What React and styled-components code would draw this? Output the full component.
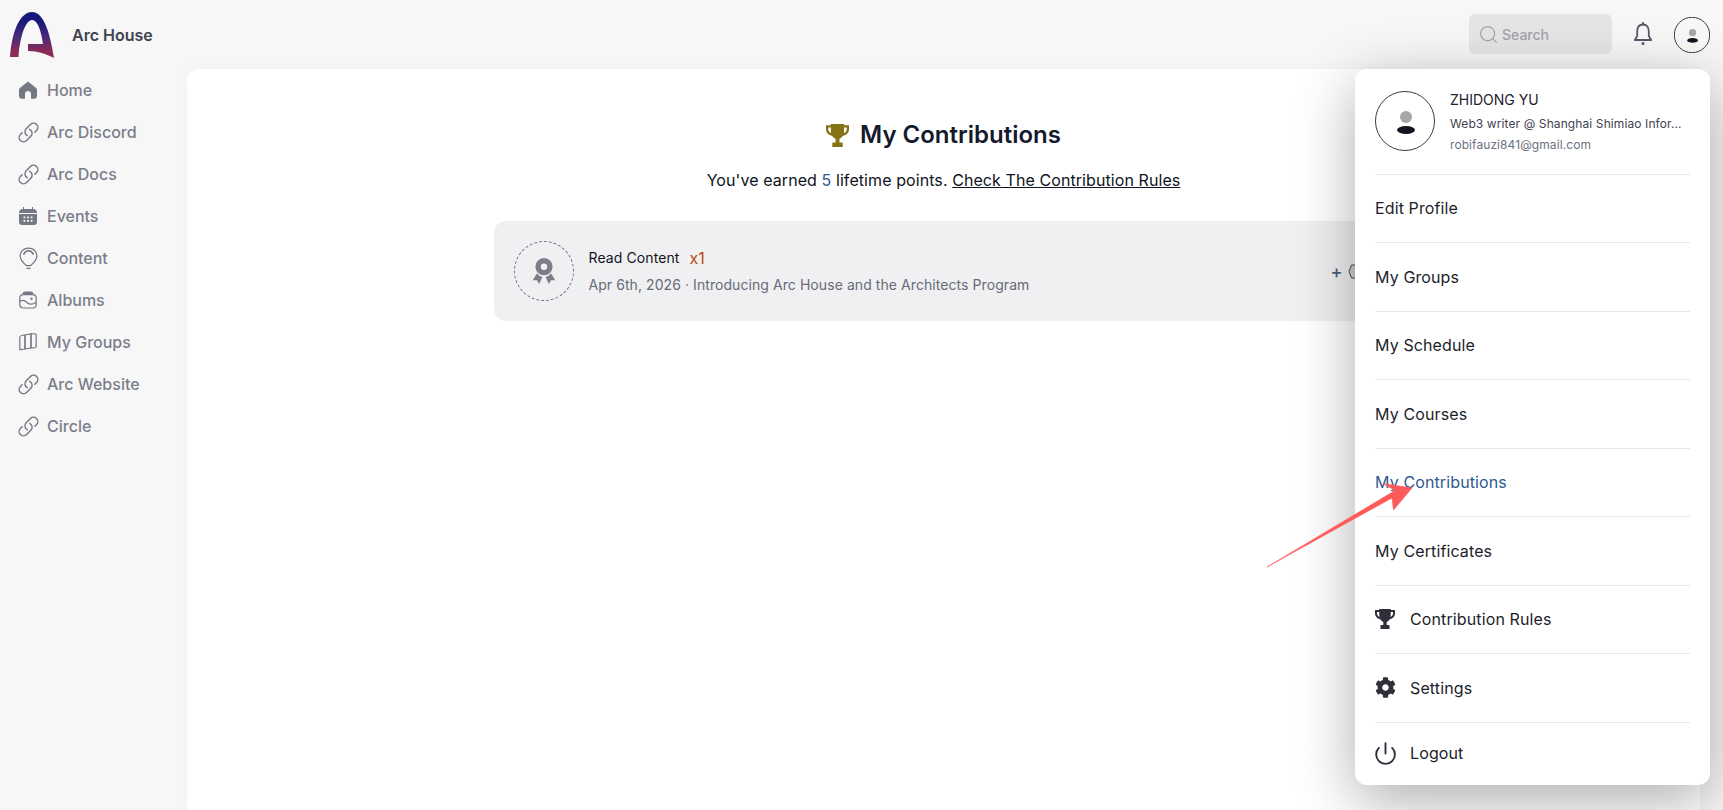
import React from "react"
import styled, { createGlobalStyle } from "styled-components"
import { FaCog } from "react-icons/fa"
import { HiOutlineLink } from "react-icons/hi2"
import { LuPower, LuSearch } from "react-icons/lu"

const GlobalStyle = createGlobalStyle`
  html, body {
    margin: 0;
    height: 100%;
    overflow: hidden;
    background: #f7f7f7;
    font-family: Inter, "Noto Sans", sans-serif;
  }
  * { box-sizing: border-box; }
`

const Page = styled.div`
  position: relative;
  width: 1723px;
  height: 810px;
  overflow: hidden;
  display: flex;
  flex-direction: column;
`

const TopBar = styled.header`
  height: 69px;
  flex: none;
  display: flex;
  align-items: center;
  padding: 0 13px 0 10px;
`

const Brand = styled.div`
  display: flex;
  align-items: center;
  gap: 18px;
  font-size: 16px;
  font-weight: 600;
  color: #3f4350;
`

const TopActions = styled.div`
  margin-left: auto;
  display: flex;
  align-items: center;
`

const SearchBox = styled.div`
  width: 143px;
  height: 40px;
  margin-top: -1px;
  border-radius: 6px;
  background: #e5e5e5;
  display: flex;
  align-items: center;
  gap: 3px;
  padding: 0 9px;
  font-size: 14px;
  font-weight: 500;
  color: #a3a3ab;
`

const BellButton = styled.div`
  display: flex;
  margin: -2px 21px 0 21px;
  color: #565a66;
`

const Body = styled.div`
  flex: 1;
  display: flex;
  min-height: 0;
`

const Sidebar = styled.nav`
  width: 187px;
  flex: none;
  padding-left: 19px;
`

const NavRow = styled.div`
  height: 42px;
  display: flex;
  align-items: center;
  gap: 10px;
  font-size: 16px;
  font-weight: 500;
  color: #7a7e8a;
`

const IconSlot = styled.span`
  width: 18px;
  height: 22px;
  flex: none;
  display: flex;
  align-items: center;
  justify-content: center;
  color: #747884;

  svg {
    flex: none;
    width: ${(p) => (p.$large ? "23px" : "18px")};
    height: ${(p) => (p.$large ? "23px" : "18px")};
  }
`

const Main = styled.main`
  flex: 1;
  margin-right: 23px;
  background: #fff;
  border-radius: 12px 12px 0 0;
  box-shadow: 0 0 16px rgba(0, 0, 0, 0.03);
  display: flex;
  flex-direction: column;
  align-items: center;
`

const Title = styled.h1`
  margin: 51px 0 0;
  display: flex;
  align-items: center;
  gap: 11px;
  font-size: 24px;
  line-height: 30px;
  font-weight: 600;
  color: #151a2d;

  svg {
    color: #857415;
  }
`

const Summary = styled.p`
  margin: 18px 0 0;
  font-size: 16px;
  line-height: 24px;
  font-weight: 400;
  letter-spacing: 0.08px;
  color: #0f1322;
`

const Points = styled.span`
  color: #2f5a92;
`

const RulesLink = styled.a`
  color: #0f1322;
  text-decoration: underline;
`

const Card = styled.section`
  width: 900px;
  height: 100px;
  margin-top: 29px;
  padding: 0 20px;
  border-radius: 12px;
  background: #f0f0f2;
  display: flex;
  align-items: center;
  gap: 15px;
`

const Badge = styled.div`
  width: 60px;
  height: 60px;
  flex: none;
  border: 1px dashed #6b6f78;
  border-radius: 50%;
  display: flex;
  align-items: center;
  justify-content: center;
`

const CardText = styled.div`
  display: flex;
  flex-direction: column;
  gap: 7px;
  margin-top: 1px;
`

const CardTitle = styled.div`
  display: flex;
  align-items: center;
  gap: 10px;
  font-size: 14px;
  line-height: 20px;
  font-weight: 400;
  letter-spacing: 0.1px;
  color: #12141c;
`

const Multiplier = styled.span`
  font-size: 16px;
  font-weight: 400;
  color: #b8480e;
`

const CardMeta = styled.div`
  font-size: 14px;
  line-height: 20px;
  font-weight: 400;
  letter-spacing: 0.07px;
  color: #666b78;
`

const Reward = styled.div`
  margin-left: auto;
  padding-right: 14px;
  display: flex;
  align-items: center;
  gap: 5px;
  font-size: 18px;
  font-weight: 500;
  color: #4b5f7a;
`

const Menu = styled.aside`
  position: absolute;
  top: 69px;
  left: 1355px;
  width: 355px;
  height: 716px;
  padding: 0 20px;
  border-radius: 12px;
  background: #fff;
  box-shadow: 0 16px 60px rgba(0, 0, 0, 0.32);
`

const Profile = styled.div`
  height: 105.5px;
  display: flex;
  align-items: center;
  gap: 15px;
  border-bottom: 1px solid #e8e8e8;
  padding-bottom: 1px;
`

const ProfileText = styled.div`
  display: flex;
  flex-direction: column;
  gap: 5px;
  min-width: 0;
  margin-top: 2px;
`

const ProfileName = styled.div`
  font-size: 14px;
  line-height: 18px;
  margin-bottom: 2px;
  color: #1f2230;
`

const ProfileBio = styled.div`
  font-size: 12px;
  line-height: 16px;
  font-weight: 400;
  letter-spacing: 0.1px;
  color: #3f4350;
`

const ProfileMail = styled.div`
  font-size: 12px;
  line-height: 16px;
  letter-spacing: 0.08px;
  color: #6b7280;
`

const MenuRow = styled.div`
  height: ${(p) => (p.$last ? "62px" : "68.5px")};
  padding-bottom: 0.3px;
  display: flex;
  align-items: center;
  gap: 15px;
  font-size: 16px;
  font-weight: 400;
  letter-spacing: 0.12px;
  color: ${(p) => (p.$active ? "#2f5a92" : "#1c1e2a")};
  border-bottom: ${(p) => (p.$last ? "none" : "1px solid #e8e8e8")};
`

const MenuIcon = styled.span`
  width: 20px;
  height: 24px;
  flex: none;
  display: flex;
  align-items: center;
  justify-content: center;
  color: #2f2f3b;

  svg {
    flex: none;
  }
`

const ArrowOverlay = styled.svg`
  position: absolute;
  left: 1260px;
  top: 480px;
  pointer-events: none;
`

const Logo = () => (
  <svg width="44" height="46" viewBox="10 11 44 46">
    <defs>
      <linearGradient id="arc" x1="0" y1="0" x2="0" y2="1">
        <stop offset="0.2" stopColor="#16177a" />
        <stop offset="0.55" stopColor="#4a2a78" />
        <stop offset="0.85" stopColor="#8a2a58" />
      </linearGradient>
    </defs>
    <path
      d="M10 56 C12 30 20 11 32 11 C44 11 50 32 54 57 C46 53 38 50 28 50 L28 43 L43 43 C41 30 38 19 32 19 C26 19 20 34 18.500 56 Z"
      fill="url(#arc)"
    />
  </svg>
)

const UserAvatar = ({ size }) => (
  <svg width={size} height={size} viewBox="0 0 60 60">
    <circle cx="30" cy="30" r="29.5" fill="none" stroke="#3a3d4a" strokeWidth={60 / size} />
    <circle cx="31" cy="26" r="6" fill="#a6a6a8" />
    <ellipse cx="31" cy="39" rx="9" ry="4" fill="#12141f" />
  </svg>
)

const BellIcon = () => (
  <svg width="20" height="24" viewBox="0 0 20 24" fill="none" stroke="currentColor" strokeWidth="1.8" strokeLinejoin="round">
    <path d="M10 2.500C6 2.500 4.200 5.500 4.200 9.500V14L1.800 18H18.200L15.800 14V9.500C15.800 5.500 14 2.500 10 2.500Z" />
    <path d="M10 0.800V2.500" strokeLinecap="round" />
    <circle cx="10" cy="21.500" r="1.500" fill="currentColor" stroke="none" />
  </svg>
)

const TrophyIcon = ({ size }) => (
  <svg width={size} height={size} viewBox="0 0 20 20" fill="currentColor">
    <path
      fillRule="evenodd"
      d="M0 1H4.200V0H15.800V1H20V4.500C20 7.500 17.500 9.800 14.800 10.200C13.800 11.600 12.800 12.400 11.700 12.800V16H14.500V20H5.500V16H8.300V12.800C7.200 12.400 6.200 11.600 5.200 10.200C2.500 9.800 0 7.500 0 4.500ZM2 3V4.500C2 6 3 7.300 4.400 7.900C4.300 6.300 4.200 4.700 4.200 3ZM18 3H15.800C15.800 4.700 15.700 6.300 15.600 7.900C17 7.300 18 6 18 4.500Z"
    />
  </svg>
)

const HomeIcon = () => (
  <svg viewBox="0 0 18 18" fill="currentColor">
    <path d="M9 0.500L16.500 6.500C17.500 7.300 18 8.200 18 9.500V15C18 16.600 16.800 17.800 15.200 17.800H12V13C12 11.300 10.700 10 9 10C7.300 10 6 11.300 6 13V17.800H2.800C1.200 17.800 0 16.600 0 15V9.500C0 8.200 0.500 7.300 1.500 6.500Z" />
  </svg>
)

const CalendarIcon = () => (
  <svg viewBox="0 0 18 18" fill="currentColor">
    <path d="M4 0H5V2H13V0H14V2C16.500 2 18 3.200 18 5.500V6H0V5.500C0 3.200 1.500 2 4 2Z" />
    <path d="M0 7H18V15C18 16.800 16.800 18 15 18H3C1.200 18 0 16.800 0 15Z" />
    <g fill="#f7f7f7">
      <rect x="4.500" y="9.500" width="1.800" height="1.800" />
      <rect x="8.100" y="9.500" width="1.800" height="1.800" />
      <rect x="11.700" y="9.500" width="1.800" height="1.800" />
      <rect x="4.500" y="13" width="1.800" height="1.800" />
      <rect x="8.100" y="13" width="1.800" height="1.800" />
      <rect x="11.700" y="13" width="1.800" height="1.800" />
    </g>
  </svg>
)

const BalloonIcon = () => (
  <svg viewBox="0 0 18 22" fill="none" stroke="currentColor" strokeWidth="1.200" strokeLinecap="round">
    <path d="M9 1C4.500 1 1 4.300 1 8.300C1 12.500 5 16 7 17.800H11C13 16 17 12.500 17 8.300C17 4.300 13.500 1 9 1Z" />
    <path d="M4.500 6.800C5.500 4.500 7 3.500 9 3.500C11 3.500 12.500 4.500 13.500 6.800" strokeWidth="1.500" />
    <path d="M7.500 20.500H10.500" />
  </svg>
)

const AlbumIcon = () => (
  <svg viewBox="0 0 18 18" fill="none" stroke="currentColor" strokeWidth="1.200" strokeLinejoin="round">
    <path d="M4 3.300C4.200 1.800 5 1 6 1H12C13 1 13.800 1.800 14 3.300Z" fill="currentColor" />
    <rect x="0.800" y="3.600" width="16.400" height="13.400" rx="3.500" />
    <path d="M0.800 10.500C3.500 8.500 6 9.500 8 11.500C10 13.500 13 14 17.200 11.500" />
    <circle cx="12.500" cy="7.800" r="1.200" fill="currentColor" stroke="none" />
  </svg>
)

const MapIcon = () => (
  <svg viewBox="0 0 18 18" fill="none" stroke="currentColor" strokeWidth="1.200" strokeLinejoin="round">
    <path d="M0.800 4.200C0.800 3.200 3 2.200 6 2V16C3 16.200 0.800 17 0.800 16.500Z" />
    <path d="M6 2L12 0.800V15L6 16Z" />
    <path d="M12 0.800C15 0.600 17.200 0.800 17.200 1.500V13.500C17.200 14.500 15 15 12 15Z" />
  </svg>
)

const MedalIcon = () => (
  <svg width="26" height="28" viewBox="0 0 24 26" fill="#7b7e88">
    <path d="M12 1a8 8 0 1 0 0 16a8 8 0 0 0 0-16zM12 6a3 3 0 1 1 0 6a3 3 0 0 1 0-6z" fillRule="evenodd" />
    <path d="M5.500 15L1.500 21.500L5.500 21.500L7.500 25L10.500 18.500C8.500 18 6.800 16.800 5.500 15Z" />
    <path d="M18.500 15L22.500 21.500L18.500 21.500L16.500 25L13.500 18.500C15.500 18 17.200 16.800 18.500 15Z" />
  </svg>
)

const DiamondIcon = () => (
  <svg width="12" height="15" viewBox="0 0 12 15" fill="#d0d0d4" stroke="#4a4d58" strokeWidth="1">
    <path d="M3.500 1H8.500L11 7.500L8.500 14H3.500L1 7.500Z" />
  </svg>
)

const navItems = [
  { label: "Home", icon: <HomeIcon /> },
  { label: "Arc Discord", icon: <HiOutlineLink />, large: true },
  { label: "Arc Docs", icon: <HiOutlineLink />, large: true },
  { label: "Events", icon: <CalendarIcon /> },
  { label: "Content", icon: <BalloonIcon />, large: true },
  { label: "Albums", icon: <AlbumIcon /> },
  { label: "My Groups", icon: <MapIcon /> },
  { label: "Arc Website", icon: <HiOutlineLink />, large: true },
  { label: "Circle", icon: <HiOutlineLink />, large: true },
]

const menuItems = [
  { label: "Edit Profile" },
  { label: "My Groups" },
  { label: "My Schedule" },
  { label: "My Courses" },
  { label: "My Contributions", active: true },
  { label: "My Certificates" },
  { label: "Contribution Rules", icon: <TrophyIcon size={20} /> },
  { label: "Settings", icon: <FaCog size={21} /> },
  { label: "Logout", icon: <LuPower size={25} strokeWidth={1.8} />, last: true },
]

const App = () => (
  <Page>
    <GlobalStyle />
    <TopBar>
      <Brand>
        <Logo />
        Arc House
      </Brand>
      <TopActions>
        <SearchBox>
          <LuSearch size={21} strokeWidth={1.3} />
          Search
        </SearchBox>
        <BellButton>
          <BellIcon />
        </BellButton>
        <UserAvatar size={36} />
      </TopActions>
    </TopBar>
    <Body>
      <Sidebar>
        {navItems.map((item) => (
          <NavRow key={item.label}>
            <IconSlot $large={item.large}>{item.icon}</IconSlot>
            {item.label}
          </NavRow>
        ))}
      </Sidebar>
      <Main>
        <Title>
          <TrophyIcon size={23} />
          My Contributions
        </Title>
        <Summary>
          You've earned <Points>5</Points> lifetime points. <RulesLink>Check The Contribution Rules</RulesLink>
        </Summary>
        <Card>
          <Badge>
            <MedalIcon />
          </Badge>
          <CardText>
            <CardTitle>
              Read Content
              <Multiplier>x1</Multiplier>
            </CardTitle>
            <CardMeta>Apr 6th, 2026 · Introducing Arc House and the Architects Program</CardMeta>
          </CardText>
          <Reward>
            +
            <DiamondIcon />
          </Reward>
        </Card>
      </Main>
    </Body>
    <Menu>
      <Profile>
        <UserAvatar size={60} />
        <ProfileText>
          <ProfileName>ZHIDONG YU</ProfileName>
          <ProfileBio>Web3 writer @ Shanghai Shimiao Infor...</ProfileBio>
          <ProfileMail>robifauzi841@gmail.com</ProfileMail>
        </ProfileText>
      </Profile>
      {menuItems.map((item) => (
        <MenuRow key={item.label} $active={item.active} $last={item.last}>
          {item.icon && <MenuIcon>{item.icon}</MenuIcon>}
          {item.label}
        </MenuRow>
      ))}
    </Menu>
    <ArrowOverlay width="160" height="95" viewBox="1260 480 160 95">
      <path d="M1267 567L1395 490.500L1383 483.500L1412 488L1393.500 510L1392 498Z" fill="#ff5a5a" stroke="#ff5a5a" strokeWidth="0.6" strokeLinejoin="round" />
    </ArrowOverlay>
  </Page>
)

export default App
